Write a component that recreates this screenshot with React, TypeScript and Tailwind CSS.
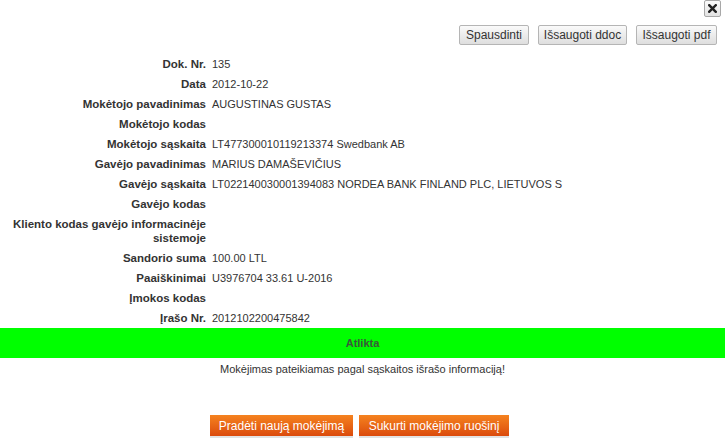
import React from 'react'

const rows: { label: string; value: string }[] = [
  { label: 'Dok. Nr.', value: '135' },
  { label: 'Data', value: '2012-10-22' },
  { label: 'Mokėtojo pavadinimas', value: 'AUGUSTINAS GUSTAS' },
  { label: 'Mokėtojo kodas', value: '' },
  { label: 'Mokėtojo sąskaita', value: 'LT477300010119213374 Swedbank AB' },
  { label: 'Gavėjo pavadinimas', value: 'MARIUS DAMAŠEVIČIUS' },
  { label: 'Gavėjo sąskaita', value: 'LT022140030001394083 NORDEA BANK FINLAND PLC, LIETUVOS S' },
  { label: 'Gavėjo kodas', value: '' },
  { label: 'Kliento kodas gavėjo informacinėje sistemoje', value: '' },
  { label: 'Sandorio suma', value: '100.00 LTL' },
  { label: 'Paaiškinimai', value: 'U3976704 33.61 U-2016' },
  { label: 'Įmokos kodas', value: '' },
  { label: 'Įrašo Nr.', value: '2012102200475842' },
]

// pilkas mygtukas viršuje
function GrayButton({ children, width }: { children: React.ReactNode; width: string }) {
  return (
    <button
      className={`${width} h-[20px] text-[12px] leading-none text-[#333] border border-[#b5b5b5] bg-gradient-to-b from-[#fafafa] to-[#dedede] rounded-[2px]`}
    >
      {children}
    </button>
  )
}

function OrangeButton({ children, width }: { children: React.ReactNode; width: string }) {
  return (
    <button
      className={`${width} h-[21px] text-[12px] leading-none text-white bg-gradient-to-b from-[#f5821f] to-[#db4a0c] shadow-[0_2px_0_#e2e2e2]`}
    >
      {children}
    </button>
  )
}

export default function App() {
  return (
    <div className="w-[725px] h-[447px] bg-white font-['Liberation_Sans',Arial,sans-serif] text-[11px] text-[#333] overflow-hidden">
      {/* uždarymo mygtukas */}
      <div className="flex justify-end pr-[4px]">
        <button className="w-[17px] h-[17px] flex items-center justify-center border border-[#a8a8a8] rounded-[2px] bg-gradient-to-b from-[#fbfbfb] to-[#e2e2e2]">
          <svg width="9" height="9" viewBox="0 0 9 9">
            <path d="M1.2 1.2 L7.8 7.8 M7.8 1.2 L1.2 7.8" stroke="#222" strokeWidth="2.4" strokeLinecap="square" />
          </svg>
        </button>
      </div>

      {/* veiksmai */}
      <div className="flex justify-end gap-[9px] pr-[8px] mt-[8px]">
        <GrayButton width="w-[70px]">Spausdinti</GrayButton>
        <GrayButton width="w-[89px]">Išsaugoti ddoc</GrayButton>
        <GrayButton width="w-[81px]">Išsaugoti pdf</GrayButton>
      </div>

      {/* duomenys */}
      <div className="grid grid-cols-[206px_1fr] gap-x-[6px] mt-[9px] text-[12px]">
        {rows.map((r) => (
          <React.Fragment key={r.label}>
            <div className="text-right font-bold leading-[14px] py-[3px] text-[#333] text-[11.5px]">{r.label}</div>
            <div className="leading-[14px] py-[3px] whitespace-nowrap text-[11px]">{r.value}</div>
          </React.Fragment>
        ))}
      </div>

      {/* būsena */}
      <div className="h-[30px] bg-[#00ff00] flex items-center justify-center font-bold text-[#3a5a3a]">
        Atlikta
      </div>
      <div className="text-center mt-[4px] leading-[14px]">
        Mokėjimas pateikiamas pagal sąskaitos išrašo informaciją!
      </div>

      <div className="flex justify-center gap-[6px] mt-[39px] pr-[6px]">
        <OrangeButton width="w-[143px]">Pradėti naują mokėjimą</OrangeButton>
        <OrangeButton width="w-[150px]">Sukurti mokėjimo ruošinį</OrangeButton>
      </div>
    </div>
  )
}
